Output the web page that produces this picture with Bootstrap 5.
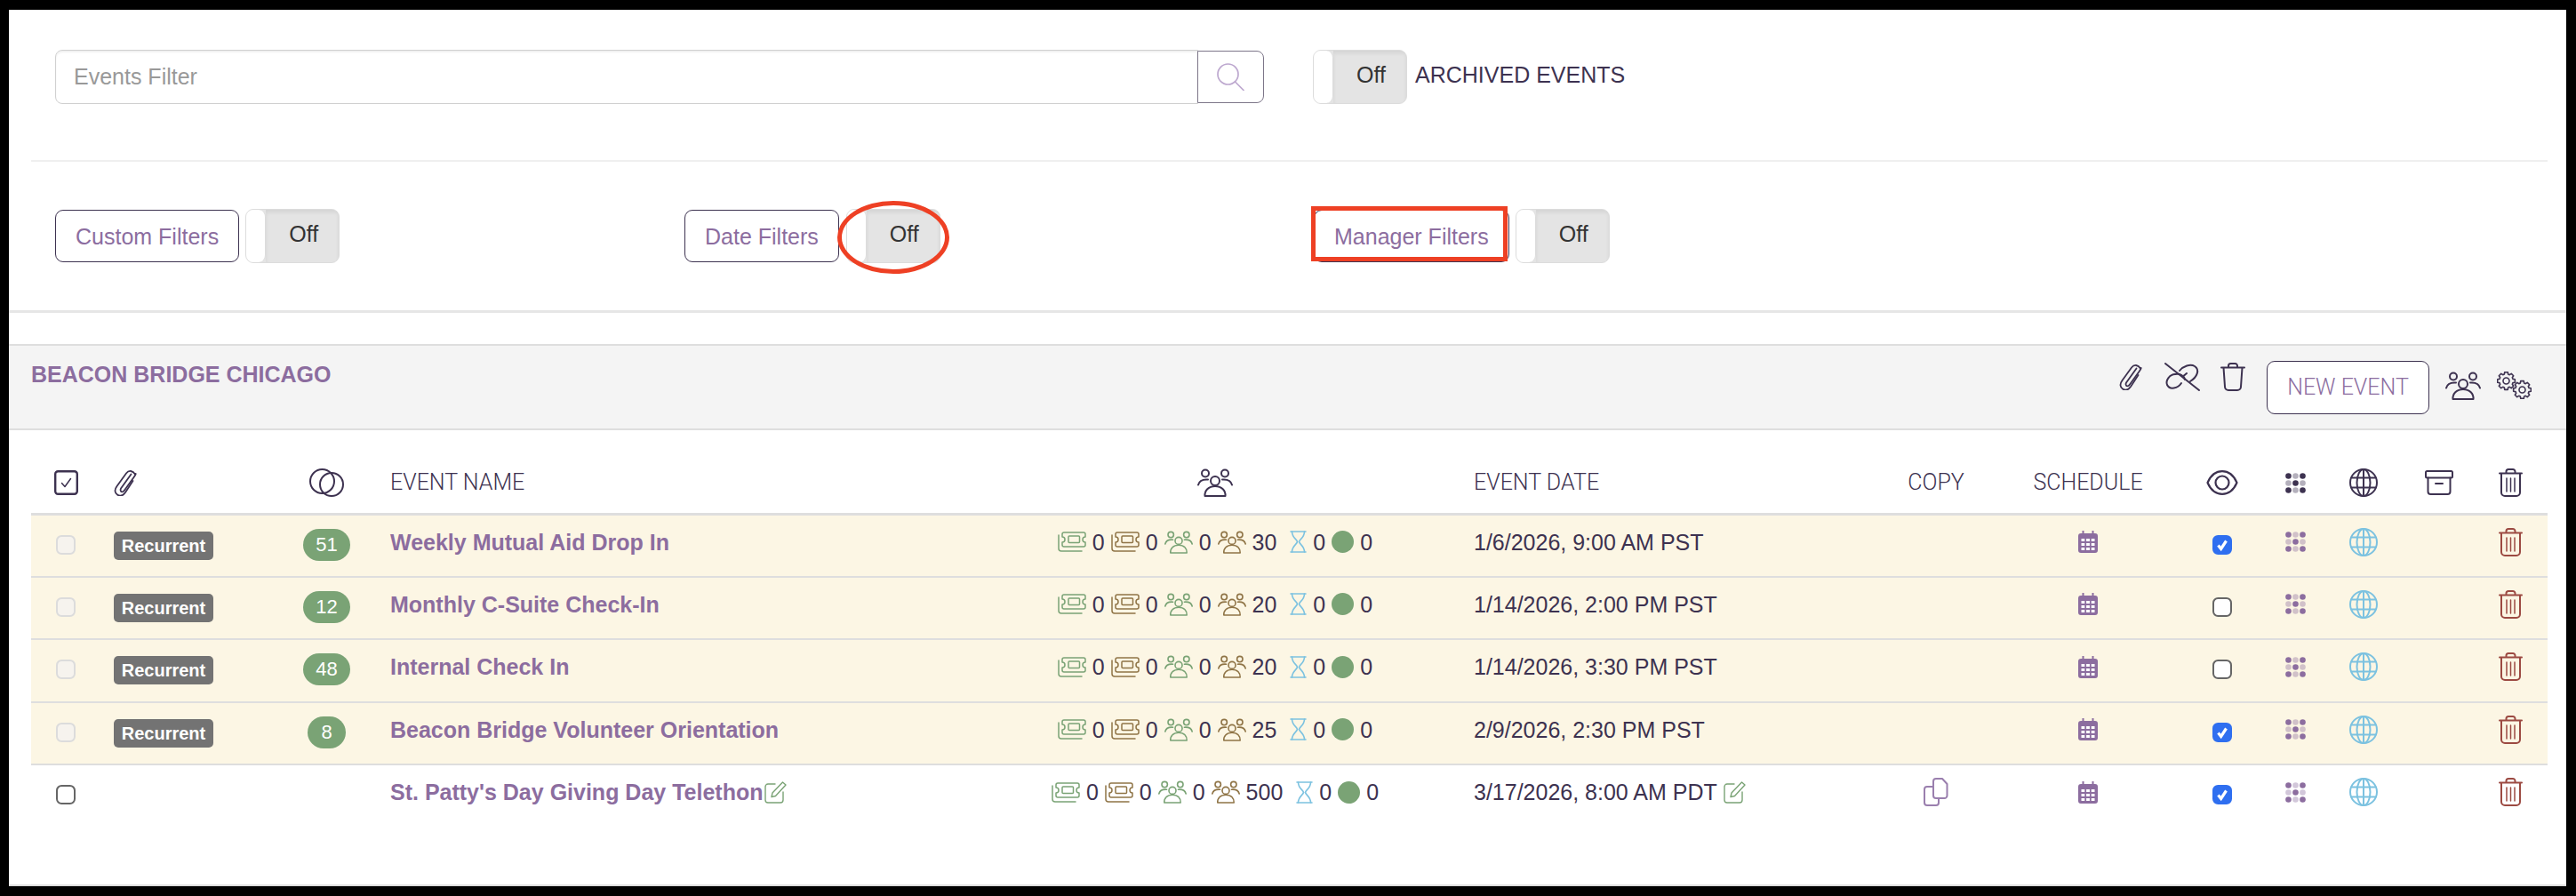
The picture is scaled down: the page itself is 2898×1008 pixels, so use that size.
<!DOCTYPE html>
<html lang="en">
<head>
<meta charset="utf-8">
<title>Events</title>
<link href="https://cdn.jsdelivr.net/npm/bootstrap@5.3.0/dist/css/bootstrap.min.css" rel="stylesheet">
<style>
:root{--ev-ink:#3d3250;--ev-purple:#8c6d9f;--ev-green:#7aa375;--ev-brown:#8f7446;--ev-sky:#7cc2e0;--ev-red:#9c4a42;--ev-line:#dedede;}
html,body{margin:0;background:#000;font-family:"Liberation Sans",Arial,sans-serif;}
.shot-frame{width:2898px;height:1008px;background:#000;padding:11px 11px 11px 10px;}
.shot-sheet{height:986px;background:#fff;border-bottom:2px solid var(--ev-line);overflow:hidden;color:var(--ev-ink);font-size:25px;line-height:30px;}
.head-one{padding:45px 0 0 52px;height:169px;}
.head-rule{height:2px;margin:0 21px 0 25px;background:#efefef;}
.head-two{padding:53px 0 53px 52px;border-bottom:3px solid #e6e6e6;}
.search-wrap{width:1360px;height:61px;}
.search-wrap .form-control{height:61px;font-size:25px;color:#777;padding:0 20px;border:1.5px solid #d0d0d0;border-radius:8px 0 0 8px;box-shadow:inset 0 2px 2px rgba(0,0,0,.06);}
.search-wrap .form-control::placeholder{color:#999;}
.search-btn{width:75px;height:59px;margin-top:1px;padding:0;background:#fff;border:1.5px solid #7d7689;border-radius:0 8px 8px 0;color:#bda8cf;}
.search-btn:hover{background:#fff;color:#bda8cf;}
.flip{display:inline-flex;width:106px;height:61px;flex:none;border:1.5px solid #dcdcdc;border-radius:9px;overflow:hidden;background:#e4e4e4;}
.flip-knob{width:22px;background:#fff;border-right:1px solid #dcdcdc;border-radius:0 8px 8px 0;}
.flip-off{flex:1;text-align:center;padding:12px 0 0 3px;font-size:25px;line-height:30px;color:#333;box-shadow:inset 0 3px 4px rgba(0,0,0,.07);}
.arch-gap{margin-left:55px;}
.arch-label{margin-left:9px;margin-top:13px;font-size:25px;line-height:30px;color:var(--ev-ink);}
.filter-slot{width:708px;}
.filter-btn{height:59px;margin-top:1px;padding:0 22px;background:#fff;border:1.5px solid var(--ev-ink);border-radius:9px;color:var(--ev-purple);font-size:25px;line-height:30px;position:relative;}
.filter-btn:hover{background:#fff;color:var(--ev-purple);border-color:var(--ev-ink);}
.flip-spaced{margin-left:7px;}
.flip-ring{position:relative;margin-left:8px;display:inline-flex;}
.mark-ellipse{position:absolute;left:-10px;right:-10px;top:-9px;bottom:-12px;border:5px solid #ee4024;border-radius:50%;pointer-events:none;}
.mark-rect{position:absolute;left:-4px;right:1px;top:-5px;bottom:0;border:5px solid #ee4024;pointer-events:none;}
.org-band{height:97px;margin-top:35px;background:#f4f4f4;border-top:2px solid var(--ev-line);border-bottom:2px solid var(--ev-line);padding:0 39px 0 25px;}
.org-title{font-size:25px;line-height:30px;font-weight:700;color:var(--ev-purple);padding-top:17px;}
.tool-ic{flex:none;color:var(--ev-ink);}
.t-clip{margin-top:20px;}
.t-unlink{margin:19px 0 0 24px;}
.t-bin{margin:19px 0 0 23px;}
.t-new{width:183px;height:60px;margin:17px 0 0 24px;padding:0;background:#fff;border:1.5px solid var(--ev-ink);border-radius:9px;color:var(--ev-purple);font-family:Roboto,"Liberation Sans",sans-serif;font-weight:300;font-size:25px;}
.t-new:hover{background:#fff;color:var(--ev-purple);border-color:var(--ev-ink);}
.t-people{margin:29px 0 0 18px;}
.t-gears{margin:29px 0 0 18px;}
.ev-table{width:2831px;margin:0 0 0 25px;table-layout:fixed;color:var(--ev-ink);--bs-table-color:var(--ev-ink);}
.c-a{width:78px}.c-b{width:213px}.c-c{width:83px}.c-d{width:697px}.c-e{width:522px}.c-f{width:478px}.c-g{width:144px}.c-h{width:198px}.c-i{width:104px}.c-j{width:60px}.c-k{width:94px}.c-l{width:76px}.c-m{width:84px}
.ev-table>thead>tr>th{height:94px;padding:44px 0 0;vertical-align:top;border-bottom:3px solid var(--ev-line);font-family:Roboto,"Liberation Sans",sans-serif;font-weight:300;font-size:25px;line-height:30px;background:#fff;}
.ev-table>tbody>tr>td{height:70.5px;padding:15px 0 0;vertical-align:top;border-bottom:2px solid var(--ev-line);font-size:25px;line-height:30px;}
.ev-table>tbody>tr:last-child>td{border-bottom:0;}
.ev-table>tbody>tr.is-recur{--bs-table-bg:#fcf6e4;}
.ev-table>tbody>tr.is-recur>td{background:#fcf6e4;}
.cell-mid{display:flex;justify-content:center;align-items:center;height:30px;}
.cell-pad{padding-left:30px !important;}
.cell-left{padding-left:15px !important;}
.ev-check{width:22px;height:22px;margin:6px 0 0;border-radius:4px;flex:none;}
.ev-check:disabled{background-color:#f6f3ee;border:2px solid #dcdcdc;opacity:1;}
.ev-check.live{border:2px solid #666;background-color:#fff;}
.ev-check.live:checked{background-color:#2f6ff0;border-color:#2f6ff0;background-size:100%;background-image:url("data:image/svg+xml,%3csvg xmlns='http://www.w3.org/2000/svg' viewBox='0 0 20 20'%3e%3cpath fill='none' stroke='%23fff' stroke-width='3.6' d='M5 10.500l3.500 4.500 6.500-10'/%3e%3c/svg%3e");}
.recur-tag{display:flex;align-items:center;justify-content:center;width:112px;height:32px;margin-top:3px;background:#737373;color:#fff;font-size:20px;font-weight:700;border-radius:5px;}
.count-pill{display:flex;align-items:center;justify-content:center;width:53px;height:36px;margin-top:6px;background:var(--ev-green);color:#fff;font-size:22px;font-weight:400;border-radius:18px;}
.count-pill.slim{width:43px;}
.ev-name{font-weight:700;color:var(--ev-purple);text-decoration:none;}
.cell-line{display:flex;align-items:center;height:30px;}
.edit-ic{margin-left:2px;color:var(--ev-green);flex:none;}
.edit-ic-date{margin-left:7px;color:var(--ev-green);flex:none;}
.stat-row{display:flex;justify-content:center;align-items:center;height:30px;gap:7px;}
.stat-far{margin-left:8px;}
.tone-green{color:var(--ev-green);}
.tone-brown{color:var(--ev-brown);}
.tone-sky{color:var(--ev-sky);}
.tone-purple{color:var(--ev-purple);}
.tone-red{color:var(--ev-red);}
.tone-copy{color:#9a7fae;}
.stat-disc{display:block;width:25px;height:25px;border-radius:50%;background:var(--ev-green);flex:none;}
svg{display:block;flex:none;}
.stroke-ic{fill:none;stroke:currentColor;stroke-linecap:round;stroke-linejoin:round;}
</style>
</head>
<body>
<svg class="d-none" xmlns="http://www.w3.org/2000/svg">
  <symbol id="s-clip" viewBox="0 0 27 30"><g class="stroke-ic" stroke-width="1.800"><path d="M24 5.500c-2.500-4-7-5-10-1L3.500 19c-3 4-2.500 7.500.5 9.500s6.500 1 9-2.500l8.500-13"/><path d="M19.500 5.500L8 21.500c-1.500 2.500.5 4.500 2.500 3.500 1-.5 2-2 3-3.500L22.500 9c2-3 3-5 1.500-3.500"/></g></symbol>
  <symbol id="s-people" viewBox="0 0 40 32"><g class="stroke-ic" stroke-width="2"><circle cx="20" cy="14" r="5"/><circle cx="9" cy="5.500" r="4"/><circle cx="31" cy="5.500" r="4"/><path d="M1 18.500c1-4 5-6.500 11-6M39 18.500c-1-4-5-6.500-11-6"/><path d="M8.500 31h23c.5-6-4-11-11.500-11s-12 5-11.500 11z"/></g></symbol>
  <symbol id="s-ticket" viewBox="0 0 32 23"><g class="stroke-ic" stroke-width="1.500"><path d="M7 1h22a2 2 0 0 1 2 2v3a3 3 0 0 0 0 6v3a2 2 0 0 1-2 2H7a2 2 0 0 1-2-2v-3a3 3 0 0 0 0-6V3a2 2 0 0 1 2-2z"/><rect x="12" y="5" width="12.500" height="7.500" rx="1"/><path d="M1 4v15a3 3 0 0 0 3 3h23"/></g></symbol>
  <symbol id="s-glass" viewBox="0 0 19 25"><g class="stroke-ic" stroke-width="1.600"><path d="M1 1h17M1 24h17"/><path d="M2.500 1c0 7 5.500 8.500 6 11.500-.5 3-6 4.500-6 11.500M16.500 1c0 7-5.500 8.500-6 11.500.5 3 6 4.500 6 11.500"/></g></symbol>
  <symbol id="s-cal" viewBox="0 0 22 25"><path fill="currentColor" d="M4.500 0h2v3h9V0h2v3H19a3 3 0 0 1 3 3v16a3 3 0 0 1-3 3H3a3 3 0 0 1-3-3V6a3 3 0 0 1 3-3h1.500z"/><g fill="#fff"><rect x="3.500" y="9" width="3.800" height="3"/><rect x="9.100" y="9" width="3.800" height="3"/><rect x="14.700" y="9" width="3.800" height="3"/><rect x="3.500" y="14" width="3.800" height="3"/><rect x="9.100" y="14" width="3.800" height="3"/><rect x="14.700" y="14" width="3.800" height="3"/><rect x="3.500" y="19" width="3.800" height="3"/><rect x="9.100" y="19" width="3.800" height="3"/><rect x="14.700" y="19" width="3.800" height="3"/></g></symbol>
  <symbol id="s-dots" viewBox="0 0 23 23"><g fill="currentColor"><circle cx="3.500" cy="3.500" r="3.300"/><circle cx="19.500" cy="3.500" r="3.300"/><circle cx="11.500" cy="11.500" r="3.300"/><circle cx="3.500" cy="19.500" r="3.300"/><circle cx="19.500" cy="19.500" r="3.300"/></g><g fill="currentColor" opacity=".38"><circle cx="11.500" cy="3.500" r="3.300"/><circle cx="3.500" cy="11.500" r="3.300"/><circle cx="19.500" cy="11.500" r="3.300"/><circle cx="11.500" cy="19.500" r="3.300"/></g></symbol>
  <symbol id="s-globe" viewBox="0 0 32 32"><g class="stroke-ic" stroke-width="2"><circle cx="16" cy="16" r="15"/><ellipse cx="16" cy="16" rx="7.500" ry="15"/><path d="M16 1v30M2.500 10.500h27M2.500 21.500h27"/></g></symbol>
  <symbol id="s-trash" viewBox="0 0 27 32"><g class="stroke-ic" stroke-width="2"><path d="M1 5.500h25M8.500 5.500V3.500a2.500 2.500 0 0 1 2.500-2.500h5a2.500 2.500 0 0 1 2.500 2.500v2M3 5.500V27a4 4 0 0 0 4 4h13a4 4 0 0 0 4-4V5.500"/><path d="M9 11v15M13.500 11v15M18 11v15" stroke-width="1.500"/></g></symbol>
  <symbol id="s-bin" viewBox="0 0 28 32"><g class="stroke-ic" stroke-width="2"><path d="M1 5.500h26M9 5.500V3.500a2.500 2.500 0 0 1 2.500-2.500h5a2.500 2.500 0 0 1 2.500 2.500v2M3.500 5.500L5 27a4 4 0 0 0 4 4h10a4 4 0 0 0 4-4l1.500-21.500"/></g></symbol>
  <symbol id="s-eye" viewBox="0 0 36 28"><g class="stroke-ic" stroke-width="2.200"><path d="M1.500 14C5 6 11 1.200 18 1.200S31 6 34.500 14C31 22 25 26.800 18 26.800S5 22 1.500 14z"/><circle cx="18" cy="14" r="7.500"/></g></symbol>
  <symbol id="s-archive" viewBox="0 0 32 28"><g class="stroke-ic" stroke-width="2"><rect x="1" y="1" width="30" height="7.500" rx="1.500"/><path d="M3.500 8.500V24a3 3 0 0 0 3 3h19a3 3 0 0 0 3-3V8.500M12 15h8"/></g></symbol>
  <symbol id="s-tick" viewBox="0 0 27 28"><g class="stroke-ic"><rect x="1.200" y="1.200" width="24.600" height="25.600" rx="3" stroke-width="2.400"/><path d="M8.500 14.500l3.500 4 6.500-9" stroke-width="1.500"/></g></symbol>
  <symbol id="s-rings" viewBox="0 0 39 32"><g class="stroke-ic" stroke-width="2"><circle cx="14.500" cy="14.500" r="13.500"/><circle cx="25" cy="18" r="13"/></g></symbol>
  <symbol id="s-search" viewBox="0 0 31 31"><g class="stroke-ic" stroke-width="1.700"><circle cx="12.500" cy="12.500" r="11.500"/><path d="M20.500 21l9.500 9.500"/></g></symbol>
  <symbol id="s-unlink" viewBox="0 0 40 32"><g class="stroke-ic" stroke-width="2"><path d="M1 1l38 30"/><path d="M17 9c4-5 12-8 17-5 6 4 3 12-5 17"/><path d="M12 13c-6 0-11 7-9 12 3 6 12 4 16-2"/><path d="M12 13c6-1 10 2 11 6"/><path d="M25 12c-1 1-2 1.500-3 2.500"/></g></symbol>
  <symbol id="s-gears" viewBox="0 0 39 31"><g class="stroke-ic" stroke-width="1.600">
    <g transform="translate(10.500 10.500)"><path id="gear-shape" d="M9.850-1.740L9.850 1.740L7.500 2.150L6.820 3.780L8.190 5.740L5.740 8.190L3.780 6.820L2.150 7.500L1.740 9.850L-1.740 9.850L-2.150 7.500L-3.780 6.820L-5.740 8.190L-8.190 5.740L-6.820 3.780L-7.500 2.150L-9.850 1.740L-9.850-1.740L-7.500-2.150L-6.820-3.780L-8.190-5.740L-5.740-8.190L-3.780-6.820L-2.150-7.500L-1.740-9.850L1.740-9.850L2.150-7.500L3.780-6.820L5.740-8.190L8.190-5.740L6.820-3.780L7.500-2.150Z"/><circle r="3.500"/></g>
    <g transform="translate(28.500 20.500)"><use href="#gear-shape"/><circle r="3.500"/></g></g></symbol>
  <symbol id="s-copy" viewBox="0 0 28 32"><g class="stroke-ic" stroke-width="2"><path d="M14 1h7l5.500 6v13a3 3 0 0 1-3 3H14a3 3 0 0 1-3-3V4a3 3 0 0 1 3-3z"/><path d="M11 10H4a3 3 0 0 0-3 3v15a3 3 0 0 0 3 3h10a3 3 0 0 0 3-3v-5"/></g></symbol>
  <symbol id="s-edit" viewBox="0 0 25 25"><g class="stroke-ic" stroke-width="1.400"><path d="M12 3H4a3 3 0 0 0-3 3v15a3 3 0 0 0 3 3h14a3 3 0 0 0 3-3v-9"/><path d="M20.500 1l3.500 3L12.500 16.500l-4.500 1 1-4.500z"/></g></symbol>
</svg>

<div class="shot-frame">
<div class="shot-sheet">

  <div class="head-one d-flex align-items-start">
    <div class="input-group search-wrap flex-nowrap">
      <input type="text" class="form-control" placeholder="Events Filter" aria-label="Events Filter">
      <button type="button" class="btn search-btn d-flex align-items-center justify-content-center" aria-label="Search"><svg width="31" height="31"><use href="#s-search"/></svg></button>
    </div>
    <span class="flip arch-gap"><span class="flip-knob"></span><span class="flip-off">Off</span></span>
    <span class="arch-label">ARCHIVED EVENTS</span>
  </div>
  <div class="head-rule"></div>

  <div class="head-two d-flex align-items-start">
    <div class="filter-slot d-flex">
      <button type="button" class="btn filter-btn">Custom Filters</button>
      <span class="flip flip-spaced"><span class="flip-knob"></span><span class="flip-off">Off</span></span>
    </div>
    <div class="filter-slot d-flex">
      <button type="button" class="btn filter-btn">Date Filters</button>
      <span class="flip-ring"><span class="flip"><span class="flip-knob"></span><span class="flip-off">Off</span></span><span class="mark-ellipse"></span></span>
    </div>
    <div class="filter-slot d-flex">
      <button type="button" class="btn filter-btn">Manager Filters<span class="mark-rect"></span></button>
      <span class="flip flip-spaced"><span class="flip-knob"></span><span class="flip-off">Off</span></span>
    </div>
  </div>

  <div class="org-band d-flex justify-content-between align-items-start">
    <div class="org-title">BEACON BRIDGE CHICAGO</div>
    <div class="d-flex align-items-start">
      <svg class="tool-ic t-clip" width="27" height="30"><use href="#s-clip"/></svg>
      <svg class="tool-ic t-unlink" width="40" height="32"><use href="#s-unlink"/></svg>
      <svg class="tool-ic t-bin" width="28" height="32"><use href="#s-bin"/></svg>
      <button type="button" class="btn t-new">NEW EVENT</button>
      <svg class="tool-ic t-people" width="40" height="32"><use href="#s-people"/></svg>
      <svg class="tool-ic t-gears" width="39" height="31"><use href="#s-gears"/></svg>
    </div>
  </div>

  <table class="table ev-table mb-0">
    <colgroup><col class="c-a"><col class="c-b"><col class="c-c"><col class="c-d"><col class="c-e"><col class="c-f"><col class="c-g"><col class="c-h"><col class="c-i"><col class="c-j"><col class="c-k"><col class="c-l"><col class="c-m"></colgroup>
    <thead>
      <tr>
        <th><div class="cell-mid"><svg width="27" height="28"><use href="#s-tick"/></svg></div></th>
        <th class="cell-left"><div class="cell-line"><svg width="27" height="30"><use href="#s-clip"/></svg></div></th>
        <th><div class="cell-mid"><svg width="39" height="32"><use href="#s-rings"/></svg></div></th>
        <th class="cell-pad">EVENT NAME</th>
        <th><div class="cell-mid"><svg width="40" height="32"><use href="#s-people"/></svg></div></th>
        <th class="cell-pad">EVENT DATE</th>
        <th class="text-center">COPY</th>
        <th class="text-center">SCHEDULE</th>
        <th><div class="cell-mid"><svg width="36" height="28"><use href="#s-eye"/></svg></div></th>
        <th><div class="cell-mid"><svg width="23" height="23"><use href="#s-dots"/></svg></div></th>
        <th><div class="cell-mid"><svg width="32" height="32"><use href="#s-globe"/></svg></div></th>
        <th><div class="cell-mid"><svg width="32" height="28"><use href="#s-archive"/></svg></div></th>
        <th><div class="cell-mid"><svg width="27" height="32"><use href="#s-trash"/></svg></div></th>
      </tr>
    </thead>
    <tbody>
      <tr class="is-recur">
        <td><div class="cell-mid"><input class="form-check-input ev-check" type="checkbox" disabled aria-label="Select"></div></td>
        <td class="cell-left"><span class="recur-tag">Recurrent</span></td>
        <td><div class="cell-mid"><span class="count-pill">51</span></div></td>
        <td class="cell-pad"><a class="ev-name" href="#">Weekly Mutual Aid Drop In</a></td>
        <td><div class="stat-row">
          <svg class="tone-green" width="32" height="23"><use href="#s-ticket"/></svg><span>0</span>
          <svg class="tone-brown" width="32" height="23"><use href="#s-ticket"/></svg><span>0</span>
          <svg class="tone-green" width="32" height="26"><use href="#s-people"/></svg><span>0</span>
          <svg class="tone-brown" width="32" height="26"><use href="#s-people"/></svg><span>30</span>
          <svg class="tone-sky stat-far" width="19" height="25"><use href="#s-glass"/></svg><span>0</span>
          <span class="stat-disc"></span><span>0</span>
        </div></td>
        <td class="cell-pad">1/6/2026, 9:00 AM PST</td>
        <td></td>
        <td><div class="cell-mid"><svg class="tone-purple" width="22" height="25"><use href="#s-cal"/></svg></div></td>
        <td><div class="cell-mid"><input class="form-check-input ev-check live" type="checkbox" checked aria-label="Visible"></div></td>
        <td><div class="cell-mid"><svg class="tone-purple" width="23" height="23"><use href="#s-dots"/></svg></div></td>
        <td><div class="cell-mid"><svg class="tone-sky" width="32" height="32"><use href="#s-globe"/></svg></div></td>
        <td></td>
        <td><div class="cell-mid"><svg class="tone-red" width="27" height="32"><use href="#s-trash"/></svg></div></td>
      </tr>
      <tr class="is-recur">
        <td><div class="cell-mid"><input class="form-check-input ev-check" type="checkbox" disabled aria-label="Select"></div></td>
        <td class="cell-left"><span class="recur-tag">Recurrent</span></td>
        <td><div class="cell-mid"><span class="count-pill">12</span></div></td>
        <td class="cell-pad"><a class="ev-name" href="#">Monthly C-Suite Check-In</a></td>
        <td><div class="stat-row">
          <svg class="tone-green" width="32" height="23"><use href="#s-ticket"/></svg><span>0</span>
          <svg class="tone-brown" width="32" height="23"><use href="#s-ticket"/></svg><span>0</span>
          <svg class="tone-green" width="32" height="26"><use href="#s-people"/></svg><span>0</span>
          <svg class="tone-brown" width="32" height="26"><use href="#s-people"/></svg><span>20</span>
          <svg class="tone-sky stat-far" width="19" height="25"><use href="#s-glass"/></svg><span>0</span>
          <span class="stat-disc"></span><span>0</span>
        </div></td>
        <td class="cell-pad">1/14/2026, 2:00 PM PST</td>
        <td></td>
        <td><div class="cell-mid"><svg class="tone-purple" width="22" height="25"><use href="#s-cal"/></svg></div></td>
        <td><div class="cell-mid"><input class="form-check-input ev-check live" type="checkbox" aria-label="Visible"></div></td>
        <td><div class="cell-mid"><svg class="tone-purple" width="23" height="23"><use href="#s-dots"/></svg></div></td>
        <td><div class="cell-mid"><svg class="tone-sky" width="32" height="32"><use href="#s-globe"/></svg></div></td>
        <td></td>
        <td><div class="cell-mid"><svg class="tone-red" width="27" height="32"><use href="#s-trash"/></svg></div></td>
      </tr>
      <tr class="is-recur">
        <td><div class="cell-mid"><input class="form-check-input ev-check" type="checkbox" disabled aria-label="Select"></div></td>
        <td class="cell-left"><span class="recur-tag">Recurrent</span></td>
        <td><div class="cell-mid"><span class="count-pill">48</span></div></td>
        <td class="cell-pad"><a class="ev-name" href="#">Internal Check In</a></td>
        <td><div class="stat-row">
          <svg class="tone-green" width="32" height="23"><use href="#s-ticket"/></svg><span>0</span>
          <svg class="tone-brown" width="32" height="23"><use href="#s-ticket"/></svg><span>0</span>
          <svg class="tone-green" width="32" height="26"><use href="#s-people"/></svg><span>0</span>
          <svg class="tone-brown" width="32" height="26"><use href="#s-people"/></svg><span>20</span>
          <svg class="tone-sky stat-far" width="19" height="25"><use href="#s-glass"/></svg><span>0</span>
          <span class="stat-disc"></span><span>0</span>
        </div></td>
        <td class="cell-pad">1/14/2026, 3:30 PM PST</td>
        <td></td>
        <td><div class="cell-mid"><svg class="tone-purple" width="22" height="25"><use href="#s-cal"/></svg></div></td>
        <td><div class="cell-mid"><input class="form-check-input ev-check live" type="checkbox" aria-label="Visible"></div></td>
        <td><div class="cell-mid"><svg class="tone-purple" width="23" height="23"><use href="#s-dots"/></svg></div></td>
        <td><div class="cell-mid"><svg class="tone-sky" width="32" height="32"><use href="#s-globe"/></svg></div></td>
        <td></td>
        <td><div class="cell-mid"><svg class="tone-red" width="27" height="32"><use href="#s-trash"/></svg></div></td>
      </tr>
      <tr class="is-recur">
        <td><div class="cell-mid"><input class="form-check-input ev-check" type="checkbox" disabled aria-label="Select"></div></td>
        <td class="cell-left"><span class="recur-tag">Recurrent</span></td>
        <td><div class="cell-mid"><span class="count-pill slim">8</span></div></td>
        <td class="cell-pad"><a class="ev-name" href="#">Beacon Bridge Volunteer Orientation</a></td>
        <td><div class="stat-row">
          <svg class="tone-green" width="32" height="23"><use href="#s-ticket"/></svg><span>0</span>
          <svg class="tone-brown" width="32" height="23"><use href="#s-ticket"/></svg><span>0</span>
          <svg class="tone-green" width="32" height="26"><use href="#s-people"/></svg><span>0</span>
          <svg class="tone-brown" width="32" height="26"><use href="#s-people"/></svg><span>25</span>
          <svg class="tone-sky stat-far" width="19" height="25"><use href="#s-glass"/></svg><span>0</span>
          <span class="stat-disc"></span><span>0</span>
        </div></td>
        <td class="cell-pad">2/9/2026, 2:30 PM PST</td>
        <td></td>
        <td><div class="cell-mid"><svg class="tone-purple" width="22" height="25"><use href="#s-cal"/></svg></div></td>
        <td><div class="cell-mid"><input class="form-check-input ev-check live" type="checkbox" checked aria-label="Visible"></div></td>
        <td><div class="cell-mid"><svg class="tone-purple" width="23" height="23"><use href="#s-dots"/></svg></div></td>
        <td><div class="cell-mid"><svg class="tone-sky" width="32" height="32"><use href="#s-globe"/></svg></div></td>
        <td></td>
        <td><div class="cell-mid"><svg class="tone-red" width="27" height="32"><use href="#s-trash"/></svg></div></td>
      </tr>
      <tr>
        <td><div class="cell-mid"><input class="form-check-input ev-check live" type="checkbox" aria-label="Select"></div></td>
        <td class="cell-left"></td>
        <td></td>
        <td class="cell-pad"><div class="cell-line"><a class="ev-name" href="#">St. Patty's Day Giving Day Telethon</a><svg class="edit-ic" width="25" height="25"><use href="#s-edit"/></svg></div></td>
        <td><div class="stat-row">
          <svg class="tone-green" width="32" height="23"><use href="#s-ticket"/></svg><span>0</span>
          <svg class="tone-brown" width="32" height="23"><use href="#s-ticket"/></svg><span>0</span>
          <svg class="tone-green" width="32" height="26"><use href="#s-people"/></svg><span>0</span>
          <svg class="tone-brown" width="32" height="26"><use href="#s-people"/></svg><span>500</span>
          <svg class="tone-sky stat-far" width="19" height="25"><use href="#s-glass"/></svg><span>0</span>
          <span class="stat-disc"></span><span>0</span>
        </div></td>
        <td class="cell-pad"><div class="cell-line">3/17/2026, 8:00 AM PDT<svg class="edit-ic-date" width="25" height="25"><use href="#s-edit"/></svg></div></td>
        <td><div class="cell-mid"><svg class="tone-copy" width="28" height="32"><use href="#s-copy"/></svg></div></td>
        <td><div class="cell-mid"><svg class="tone-purple" width="22" height="25"><use href="#s-cal"/></svg></div></td>
        <td><div class="cell-mid"><input class="form-check-input ev-check live" type="checkbox" checked aria-label="Visible"></div></td>
        <td><div class="cell-mid"><svg class="tone-purple" width="23" height="23"><use href="#s-dots"/></svg></div></td>
        <td><div class="cell-mid"><svg class="tone-sky" width="32" height="32"><use href="#s-globe"/></svg></div></td>
        <td></td>
        <td><div class="cell-mid"><svg class="tone-red" width="27" height="32"><use href="#s-trash"/></svg></div></td>
      </tr>
    </tbody>
  </table>

</div>
</div>
<script src="https://cdn.jsdelivr.net/npm/bootstrap@5.3.0/dist/js/bootstrap.bundle.min.js"></script>
</body>
</html>
